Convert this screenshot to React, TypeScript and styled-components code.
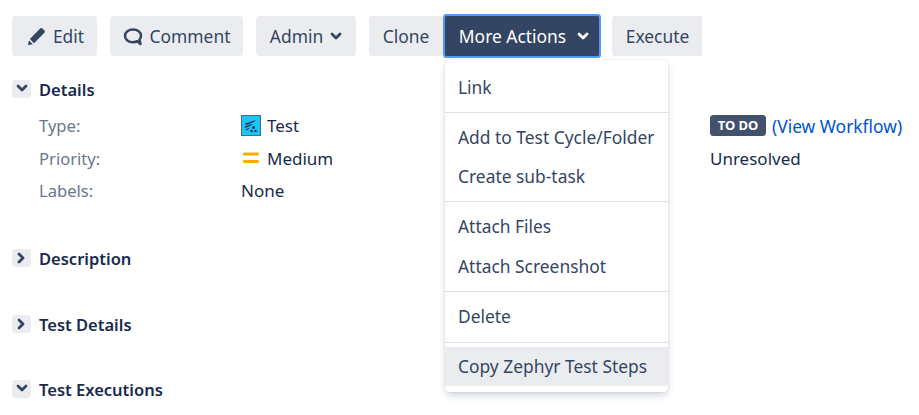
import React from 'react';
import styled, {createGlobalStyle} from "styled-components";

const GlobalStyle = createGlobalStyle`
    html, body {
        margin: 0;
        background: #fff;
        overflow: hidden;
    }
    body {
        font-family: "Noto Sans", "Open Sans", sans-serif;
        font-size: 17px;
        color: #172b4d;
    }
`

const ChevronDown = () => (
    <svg width="12" height="9" viewBox="0 0 12 9">
        <path d="M2 2l4 4 4-4" fill="none" stroke="currentColor" strokeWidth="2.8" strokeLinecap="round" strokeLinejoin="round"/>
    </svg>
)

const ChevronRight = () => (
    <svg width="9" height="12" viewBox="0 0 9 12">
        <path d="M2 2l4 4-4 4" fill="none" stroke="currentColor" strokeWidth="2.8" strokeLinecap="round" strokeLinejoin="round"/>
    </svg>
)

const PencilIcon = () => (
    <svg width="19" height="19" viewBox="0 0 19 19">
        <path d="M13.2 1.6a1.6 1.6 0 0 1 2.2 0l2 2a1.6 1.6 0 0 1 0 2.2L7 16.2 2.8 12.1z" fill="currentColor"/>
        <path d="M2 13.4l3.8 3.8-4.2.9a.5.5 0 0 1-.6-.6z" fill="currentColor"/>
    </svg>
)

const CommentIcon = () => (
    <svg width="20" height="19" viewBox="0 0 20 19">
        <path d="M10 2.500C5.600 2.500 2 5 2 8.800s3.600 6.400 8 6.400c1.600 0 3.100-.3 4.300-1l3.200 2.800-1-4.500c1-1.100 1.500-2.300 1.500-3.700C18 5 14.400 2.500 10 2.500z" fill="none" stroke="currentColor" strokeWidth="2.500" strokeLinejoin="round"/>
    </svg>
)

const TestTypeIcon = () => (
    <svg width="20" height="21" viewBox="0 0 20 21">
        <rect x="0.5" y="0.5" width="19" height="20" fill="#19c5f5" stroke="#4a6a80"/>
        <path d="M4 8.500l11-3.500-2 2-8 3zM3.500 11.500l8-3-1.500 2-5.500 2.500zM4.500 14.500l4-2-.5 1.500-2.500 1.500z" fill="#253858"/>
        <circle cx="12.500" cy="12.500" r="1.500" fill="#253858"/>
        <circle cx="10.500" cy="16" r="1.300" fill="#253858"/>
        <circle cx="14.500" cy="16" r="1.300" fill="#253858"/>
    </svg>
)

const PriorityIcon = () => (
    <svg width="16" height="12" viewBox="0 0 16 12">
        <rect x="0" y="0.500" width="16" height="3" rx="1.200" fill="#ffab00"/>
        <rect x="0" y="8" width="16" height="3" rx="1.200" fill="#ffab00"/>
    </svg>
)

export default function App() {
    return (
        <Page>
            <GlobalStyle/>
            <Toolbar>
                <ToolButton $width={85} $shift={2}><PencilIcon/>Edit</ToolButton>
                <ToolButton $width={133}><CommentIcon/>Comment</ToolButton>
                <ToolButton $width={100}>Admin<ChevronDown/></ToolButton>
                <CloneButton $width={74}>Clone</CloneButton>
                <MenuAnchor>
                    <ActiveButton $width={158} $shift={4}>More Actions<ChevronDown/></ActiveButton>
                    <Menu>
                        <MenuGroup>
                            <MenuItem>Link</MenuItem>
                        </MenuGroup>
                        <MenuGroup>
                            <MenuItem>Add to Test Cycle/Folder</MenuItem>
                            <MenuItem>Create sub-task</MenuItem>
                        </MenuGroup>
                        <MenuGroup>
                            <MenuItem>Attach Files</MenuItem>
                            <MenuItem>Attach Screenshot</MenuItem>
                        </MenuGroup>
                        <MenuGroup>
                            <MenuItem>Delete</MenuItem>
                        </MenuGroup>
                        <LastGroup>
                            <HoverItem>Copy Zephyr Test Steps</HoverItem>
                        </LastGroup>
                    </Menu>
                </MenuAnchor>
                <ExecuteButton $width={90} $shift={1}>Execute</ExecuteButton>
            </Toolbar>

            <Section $gap={37}>
                <SectionHeader>
                    <Toggle><ChevronDown/></Toggle>
                    <SectionTitle>Details</SectionTitle>
                </SectionHeader>
                <DetailsGrid>
                    <Label>Type:</Label>
                    <Value><TestTypeIcon/>Test</Value>
                    <StatusValue><Lozenge>TO DO</Lozenge><WorkflowLink>(<a>View Workflow</a>)</WorkflowLink></StatusValue>
                    <Label>Priority:</Label>
                    <Value><PriorityWrap><PriorityIcon/></PriorityWrap>Medium</Value>
                    <StatusValue>Unresolved</StatusValue>
                    <Label>Labels:</Label>
                    <Value>None</Value>
                </DetailsGrid>
            </Section>

            <Section $gap={38}>
                <SectionHeader>
                    <Toggle><ChevronRight/></Toggle>
                    <SectionTitle>Description</SectionTitle>
                </SectionHeader>
            </Section>

            <Section $gap={37}>
                <SectionHeader>
                    <Toggle><ChevronRight/></Toggle>
                    <SectionTitle>Test Details</SectionTitle>
                </SectionHeader>
            </Section>

            <Section $gap={0}>
                <SectionHeader>
                    <Toggle><ChevronDown/></Toggle>
                    <SectionTitle>Test Executions</SectionTitle>
                </SectionHeader>
            </Section>
        </Page>
    );
}

const Page = styled.div`
    width: 919px;
    height: 415px;
    padding: 16px 12px 0;
    box-sizing: border-box;
    overflow: hidden;
`

const Toolbar = styled.div`
    display: flex;
    align-items: flex-start;
    height: 40px;
    margin-bottom: 19px;
`

const ToolButton = styled.div<{$width: number; $shift?: number}>`
    display: flex;
    align-items: center;
    justify-content: center;
    gap: 7px;
    width: ${props => props.$width}px;
    height: 40px;
    margin-right: 13px;
    padding-left: ${props => props.$shift || 0}px;
    box-sizing: border-box;
    background: #ebecf0;
    border-radius: 3.500px;
    color: #344563;
    font-size: 17.400px;
    white-space: nowrap;
    svg {
        flex: none;
        color: #344563;
    }
`

const CloneButton = styled(ToolButton)`
    margin-right: 0;
    border-radius: 3.500px 0 0 3.500px;
`

const MenuAnchor = styled.div`
    position: relative;
    margin-right: 11px;
`

const ActiveButton = styled(ToolButton)`
    height: 44px;
    margin: -2px 0 0;
    gap: 11px;
    background: #344563;
    border: 2px solid #4c9aff;
    color: #fff;
    svg {
        color: #fff;
    }
`

const ExecuteButton = styled(ToolButton)`
    margin: 0;
    border-radius: 3.500px 0 0 3.500px;
`

const Menu = styled.div`
    position: absolute;
    top: 44px;
    left: 2px;
    width: 223px;
    box-sizing: border-box;
    background: #fff;
    border-radius: 3.500px;
    box-shadow: 0 4px 8px -2px rgba(9, 30, 66, 0.25), 0 0 1px rgba(9, 30, 66, 0.31);
    padding-bottom: 6px;
    font-size: 17.400px;
    z-index: 2;
`

const MenuGroup = styled.div`
    padding: 4.500px 0 5px;
    border-bottom: 1px solid #dfe1e6;
    &:first-child {
        padding: 7px 0 5px;
    }
    &:nth-child(4) {
        padding-bottom: 6px;
    }
`

const LastGroup = styled.div`
    padding-top: 4px;
`

const MenuItem = styled.div`
    display: flex;
    align-items: center;
    height: 39.500px;
    padding: 0 13px;
    color: #344563;
    white-space: nowrap;
`

const HoverItem = styled(MenuItem)`
    background: #ebecf0;
`

const Section = styled.section<{$gap: number}>`
    margin-bottom: ${props => props.$gap}px;
`

const SectionHeader = styled.div`
    display: flex;
    align-items: center;
    height: 28px;
    gap: 8px;
`

const Toggle = styled.div`
    display: flex;
    align-items: center;
    justify-content: center;
    width: 19px;
    height: 18px;
    background: #ebecf0;
    border-radius: 3.500px;
    color: #344563;
    margin-top: -1px;
`

const SectionTitle = styled.h3`
    margin: 0;
    font-size: 16.500px;
    font-weight: 600;
    color: #172b4d;
`

const DetailsGrid = styled.div`
    display: grid;
    grid-template-columns: 202px 469px 1fr;
    grid-auto-rows: 32.500px;
    align-items: center;
    padding-left: 27px;
    margin-top: 6.500px;
    white-space: nowrap;
`

const Label = styled.div`
    grid-column: 1;
    color: #6b778c;
    font-size: 16.600px;
`

const Value = styled.div`
    grid-column: 2;
    display: flex;
    align-items: center;
    gap: 6px;
    color: #172b4d;
`

const PriorityWrap = styled.span`
    display: flex;
    width: 20px;
    justify-content: center;
`

const StatusValue = styled.div`
    grid-column: 3;
    display: flex;
    align-items: center;
    gap: 6px;
    color: #172b4d;
`

const Lozenge = styled.span`
    display: inline-block;
    width: 56px;
    text-align: center;
    height: 21px;
    line-height: 21px;
    background: #42526e;
    border-radius: 3.500px;
    color: #fff;
    font-size: 13px;
    font-weight: 700;
`

const WorkflowLink = styled.span`
    color: #0052cc;
    font-size: 17.400px;
`
